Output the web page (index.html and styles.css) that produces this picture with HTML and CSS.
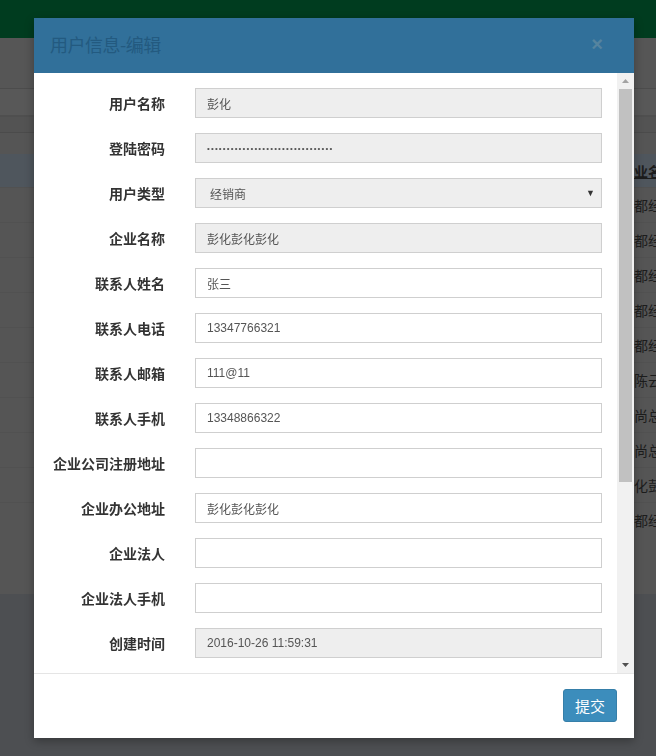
FILE: index.html
```html
<!DOCTYPE html>
<html lang="zh">
<head>
<meta charset="utf-8">
<title>用户信息-编辑</title>
<link rel="stylesheet" href="styles.css">
</head>
<body>
<div class="page">
  <div class="topbar"></div>
  <div class="toolbar"></div>
  <div class="filter"></div>
  <div class="strip"></div>
  <div class="gap"></div>
  <div class="grid">
    <div class="grid-row head"><span></span><span class="cell">企业名称</span></div>
    <div class="grid-row"><span></span><span class="cell">成都经销商</span></div>
    <div class="grid-row"><span></span><span class="cell">成都经销商</span></div>
    <div class="grid-row"><span></span><span class="cell">成都经销商</span></div>
    <div class="grid-row"><span></span><span class="cell">成都经销商</span></div>
    <div class="grid-row"><span></span><span class="cell">成都经销商</span></div>
    <div class="grid-row"><span></span><span class="cell">张陈云</span></div>
    <div class="grid-row"><span></span><span class="cell">王尚总</span></div>
    <div class="grid-row"><span></span><span class="cell">李尚总</span></div>
    <div class="grid-row"><span></span><span class="cell">彭化彭化</span></div>
    <div class="grid-row"><span></span><span class="cell">成都经销商</span></div>
  </div>
  <div class="pager"></div>
  <div class="footer"></div>
</div>

<div class="modal">
  <div class="modal-header">
    <h4 class="modal-title">用户信息-编辑</h4>
    <span class="close">×</span>
  </div>
  <div class="modal-body">
    <div class="scroll-content">
      <div class="form">
        <label class="lbl">用户名称</label><div class="input ro">彭化</div>
        <label class="lbl">登陆密码</label><div class="input ro pwd">••••••••••••••••••••••••••••••••</div>
        <label class="lbl">用户类型</label><div class="input ro select"><span>经销商</span><span class="caret">▼</span></div>
        <label class="lbl">企业名称</label><div class="input ro">彭化彭化彭化</div>
        <label class="lbl">联系人姓名</label><div class="input">张三</div>
        <label class="lbl">联系人电话</label><div class="input">13347766321</div>
        <label class="lbl">联系人邮箱</label><div class="input">111@11</div>
        <label class="lbl">联系人手机</label><div class="input">13348866322</div>
        <label class="lbl">企业公司注册地址</label><div class="input"></div>
        <label class="lbl">企业办公地址</label><div class="input">彭化彭化彭化</div>
        <label class="lbl">企业法人</label><div class="input"></div>
        <label class="lbl">企业法人手机</label><div class="input"></div>
        <label class="lbl">创建时间</label><div class="input ro">2016-10-26 11:59:31</div>
        <label class="lbl">更新时间</label><div class="input ro">2016-10-26 11:59:31</div>
        <label class="lbl">所属区域</label><div class="input"></div>
        <label class="lbl">营业执照号</label><div class="input"></div>
        <label class="lbl">审核状态</label><div class="input"></div>
        <label class="lbl">备注</label><div class="input"></div>
      </div>
    </div>
    <div class="scrollbar">
      <div class="sb-btn"><svg width="7" height="4" viewBox="0 0 7 4"><path d="M0 4 L3.5 0 L7 4 Z" fill="#a3a3a3"/></svg></div>
      <div class="sb-track"><div class="sb-thumb"></div></div>
      <div class="sb-btn"><svg width="7" height="4" viewBox="0 0 7 4"><path d="M0 0 L3.5 4 L7 0 Z" fill="#505050"/></svg></div>
    </div>
  </div>
  <div class="modal-footer">
    <button class="btn">提交</button>
  </div>
</div>
</body>
</html>
```

FILE: styles.css
```css
html, body {
  margin: 0;
  padding: 0;
}
body {
  width: 656px;
  height: 756px;
  overflow: hidden;
  background: #4d4f52;
  font-family: "Liberation Sans", "Noto Sans CJK SC", sans-serif;
}
.page {
  display: flex;
  flex-direction: column;
}
.topbar {
  height: 38px;
  background: #003c1f;
}
.toolbar {
  height: 50px;
  background: #565656;
  border-bottom: 1px solid #4c4c4c;
}
.filter {
  height: 26px;
  background: #585858;
  border-bottom: 2px solid #4f4f4f;
}
.strip {
  height: 15px;
  background: #535353;
  border-bottom: 1px solid #4b4b4b;
}
.gap {
  height: 21px;
  background: #555555;
}
.grid {
  display: flex;
  flex-direction: column;
  background: #555555;
}
.grid-row {
  display: grid;
  grid-template-columns: 620px 1fr;
  height: 35px;
  align-items: center;
  border-top: 1px solid #515151;
  box-sizing: border-box;
  font-family: "Noto Sans CJK SC", sans-serif;
  font-size: 14px;
  color: #1c1c1c;
  white-space: nowrap;
}
.grid-row.head {
  height: 33px;
  background: #4f565d;
  font-weight: bold;
  border-top: none;
}
.grid-row.head .cell {
  text-decoration: underline;
}
.pager {
  height: 57px;
  background: #555555;
}
.footer {
  flex: 1;
  background: #4d4f52;
}

/* modal */
.modal {
  position: fixed;
  top: 18px;
  left: 34px;
  width: 600px;
  background: #fff;
  display: flex;
  flex-direction: column;
  box-shadow: 0 3px 9px rgba(0,0,0,0.3);
}
.modal-header {
  height: 55px;
  background: #31709a;
  display: flex;
  align-items: center;
  justify-content: space-between;
  padding: 0 31px 4px 16px;
  box-sizing: border-box;
}
.modal-title {
  margin: 0;
  font-family: "Noto Sans CJK SC", sans-serif;
  font-weight: normal;
  font-size: 18px;
  color: #235a80;
  letter-spacing: -0.5px;
}
.close {
  font-family: "Liberation Sans", sans-serif;
  font-size: 20px;
  font-weight: bold;
  color: #56849f;
  line-height: 1;
}
.modal-body {
  height: 600px;
  display: flex;
  overflow: hidden;
}
.scroll-content {
  flex: 1;
  overflow: hidden;
  padding-top: 15px;
}
.form {
  display: grid;
  grid-template-columns: 131px 407px;
  column-gap: 30px;
  row-gap: 15px;
  align-items: center;
}
.lbl {
  text-align: right;
  font-family: "Noto Sans CJK SC", sans-serif;
  font-weight: bold;
  font-size: 14px;
  color: #333;
  white-space: nowrap;
}
.input {
  height: 30px;
  box-sizing: border-box;
  border: 1px solid #cfcfcf;
  background: #fff;
  padding: 0 11px;
  display: flex;
  align-items: center;
  font-size: 12px;
  color: #555;
  white-space: nowrap;
}
.input.ro {
  background: #eeeeee;
}
.input.pwd {
  font-size: 8px;
  letter-spacing: 1.15px;
  color: #555;
}
.input.select {
  justify-content: space-between;
  padding-left: 14px;
  padding-right: 6px;
}
.caret {
  font-size: 9px;
  color: #333;
}
.scrollbar {
  width: 17px;
  background: #f1f1f1;
  display: flex;
  flex-direction: column;
}
.sb-btn {
  height: 16px;
  display: flex;
  align-items: center;
  justify-content: center;
}
.sb-track {
  flex: 1;
  padding: 0 2px;
}
.sb-thumb {
  height: 393px;
  background: #c1c1c1;
}
.modal-footer {
  border-top: 1px solid #e5e5e5;
  padding: 15px 17px 16px;
  display: flex;
  justify-content: flex-end;
}
.btn {
  width: 54px;
  height: 33px;
  border: 1px solid #367fa9;
  border-radius: 3px;
  background: #3c8dbc;
  color: #fff;
  font-family: "Noto Sans CJK SC", sans-serif;
  font-size: 15px;
  padding: 0;
}
```
